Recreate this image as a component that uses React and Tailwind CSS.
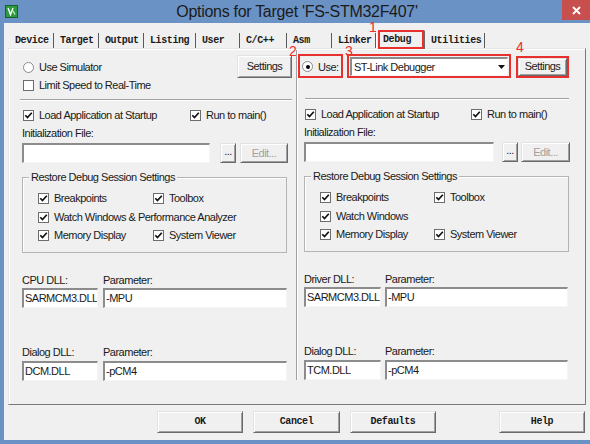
import React from 'react';

const sans = "font-['Liberation_Sans',Arial,sans-serif] text-[11px] tracking-[-0.5px] text-[#1a1a1a]";
const mono = "font-['Liberation_Mono','Courier_New',monospace] font-bold text-[10px] tracking-[-0.4px] text-[#1a1a1a]";

const raised =
    'bg-[#f0f0f0] border border-t-[#e3e3e3] border-l-[#e3e3e3] border-r-[#696969] border-b-[#696969] shadow-[inset_1px_1px_0_#ffffff,inset_-1px_-1px_0_#a0a0a0]';
const sunken =
    'bg-white border-t-2 border-l-2 border-r border-b border-t-[#8c8c8c] border-l-[#8c8c8c] border-r-[#f5f5f5] border-b-[#f5f5f5]';

const CheckMark = () => (
    <svg width="9" height="9" viewBox="0 0 9 9">
        <path d="M1.3 4.2 L3.5 6.6 L7.8 1.8" stroke="#111" strokeWidth="1.7" fill="none" />
    </svg>
);

const Check = ({ label, checked = true, className = '' }) => (
    <div className={`flex items-center h-[14px] ${className}`}>
        <span className="w-[11px] h-[11px] shrink-0 border border-[#6d6d6d] bg-white flex items-center justify-center">
            {checked && <CheckMark />}
        </span>
        <span className="ml-[5px] leading-[14px] whitespace-nowrap">{label}</span>
    </div>
);

const Radio = ({ label, checked = false }) => (
    <div className="flex items-center h-[14px]">
        <span className="w-[11px] h-[11px] shrink-0 rounded-full border border-[#8a8a8a] bg-white flex items-center justify-center">
            {checked && <span className="w-[4px] h-[4px] rounded-full bg-black" />}
        </span>
        <span className="ml-[5px] leading-[14px] whitespace-nowrap">{label}</span>
    </div>
);

const Btn = ({ children, className = '', disabled = false, font = sans }) => (
    <div className={`${raised} ${font} flex items-center justify-center leading-none ${disabled ? '!text-[#a0a0a0]' : ''} ${className}`}>
        {children}
    </div>
);

const Field = ({ value = '', className = '' }) => (
    <div className={`${sunken} h-[20px] flex items-center pl-[1px] overflow-hidden whitespace-nowrap ${className}`}>
        {value}
    </div>
);

const Separator = ({ className = '' }) => (
    <div className={`h-[2px] border-t border-t-[#a0a0a0] border-b border-b-white ${className}`} />
);

const GroupBox = ({ rows, toolCol }) => (
    <div className="relative w-[265px] h-[76px] border border-[#b4b4b4] shadow-[inset_1px_1px_0_#ffffff] pt-[13px] pl-[15px]">
        <span className="absolute -top-[8px] left-[6px] px-[2px] bg-[#f0f0f0] leading-[14px]">
            Restore Debug Session Settings
        </span>
        <div className="flex">
            <Check label="Breakpoints" className={toolCol} />
            <Check label="Toolbox" />
        </div>
        <div className="flex mt-[5px]">
            <Check label={rows} />
        </div>
        <div className="flex mt-[4px]">
            <Check label="Memory Display" className={toolCol} />
            <Check label="System Viewer" />
        </div>
    </div>
);

const TABS = [
    { name: 'Device', w: 'w-[45px]' },
    { name: 'Target', w: 'w-[45px]' },
    { name: 'Output', w: 'w-[45px]' },
    { name: 'Listing', w: 'w-[52px]' },
    { name: 'User', w: 'w-[44px]' },
    { name: 'C/C++', w: 'w-[47px]' },
    { name: 'Asm', w: 'w-[45px]' },
    { name: 'Linker', w: 'w-[44px]' },
    { name: 'Debug', w: 'w-[49px]', active: true },
    { name: 'Utilities', w: 'w-[60px]' },
];

const App = () => {
    return (
        <div className={`relative w-[590px] h-[444px] bg-[#6b92c5] overflow-hidden flex flex-col ${sans}`}>
            {/* 제목줄 */}
            <div className="h-[23px] flex items-start shrink-0">
                <div className="ml-[5px] mt-[5px] w-[13px] h-[13px]">
                    <svg width="13" height="13" viewBox="0 0 13 13">
                        <rect x="0.5" y="0.5" width="12" height="12" fill="#2e9a3e" stroke="#1a5f25" />
                        <path d="M3 3 L5.5 9.5 L8 3" stroke="#ffffff" strokeWidth="1.4" fill="none" />
                        <path d="M8 6 L10 9.5" stroke="#d8f0d8" strokeWidth="1.2" fill="none" />
                    </svg>
                </div>
                <div className="flex-1 pl-[14px] text-center font-['Liberation_Sans',Arial,sans-serif] text-[16px] tracking-[-0.3px] text-[#1b1b1b] leading-[23px]">
                    Options for Target 'FS-STM32F407'
                </div>
                <div className="w-[28px] h-[20px] bg-[#c7504f] flex items-center justify-center">
                    <svg width="9" height="9" viewBox="0 0 9 9">
                        <path d="M1 1 L8 8 M8 1 L1 8" stroke="#ffffff" strokeWidth="1.8" />
                    </svg>
                </div>
            </div>

            {/* 본문 */}
            <div className="flex-1 ml-[4px] mb-[4px] bg-[#f0f0f0] flex flex-col">
                {/* 탭 */}
                <div className="mt-[7px] pl-[5px] h-[18px] flex items-end">
                    {TABS.map((t) =>
                        t.active ? (
                            <div
                                key={t.name}
                                className={`${t.w} ${mono} relative z-10 h-[19px] -mb-[1px] bg-[#f0f0f0] border-t border-l border-t-white border-l-white border-r border-r-[#696969] pl-[6px] pt-[3px] leading-[12px]`}
                            >
                                {t.name}
                            </div>
                        ) : (
                            <div
                                key={t.name}
                                className={`${t.w} ${mono} h-[15px] border-r border-r-[#5a5a5a] pl-[6px] pt-[2px] leading-[12px]`}
                            >
                                {t.name}
                            </div>
                        )
                    )}
                </div>

                {/* 탭 패널 */}
                <div className="ml-[4px] w-[578px] h-[357px] border border-t-[#e6e6e6] border-l-[#e6e6e6] border-r-[#7a7a7a] border-b-[#7a7a7a] shadow-[inset_1px_1px_0_#ffffff] flex">
                    {/* 왼쪽: 시뮬레이터 */}
                    <div className="w-[287px] flex flex-col">
                        <div className="pt-[6px] pl-[14px] pr-[4px] flex items-start">
                            <div className="flex flex-col pt-[5px]">
                                <Radio label="Use Simulator" />
                                <Check label="Limit Speed to Real-Time" checked={false} className="mt-[4px]" />
                            </div>
                            <Btn className="ml-auto w-[55px] h-[23px]">Settings</Btn>
                        </div>
                        <Separator className="mt-[7px] ml-[11px] mr-[4px]" />
                        <div className="mt-[7px] pl-[14px] flex">
                            <Check label="Load Application at Startup" className="w-[167px]" />
                            <Check label="Run to main()" />
                        </div>
                        <div className="mt-[4px] pl-[13px] h-[14px] leading-[14px]">Initialization File:</div>
                        <div className="mt-[3px] pl-[13px] flex">
                            <Field className="w-[188px]" />
                            <Btn className="ml-[10px] w-[16px] h-[20px] pb-[4px]">...</Btn>
                            <Btn className="ml-[4px] w-[48px] h-[20px]" disabled>Edit...</Btn>
                        </div>
                        <div className="mt-[14px] ml-[13px]">
                            <GroupBox rows="Watch Windows & Performance Analyzer" toolCol="w-[115px]" />
                        </div>
                        <div className="mt-[20px] pl-[13px] flex h-[14px] leading-[14px]">
                            <span className="w-[81px]">CPU DLL:</span>
                            <span>Parameter:</span>
                        </div>
                        <div className="mt-[1px] pl-[13px] flex">
                            <Field className="w-[76px]" value="SARMCM3.DLL" />
                            <Field className="ml-[5px] w-[184px]" value="-MPU" />
                        </div>
                        <div className="mt-[37px] pl-[13px] flex h-[14px] leading-[14px]">
                            <span className="w-[81px]">Dialog DLL:</span>
                            <span>Parameter:</span>
                        </div>
                        <div className="mt-[2px] pl-[13px] flex">
                            <Field className="w-[76px]" value="DCM.DLL" />
                            <Field className="ml-[5px] w-[184px]" value="-pCM4" />
                        </div>
                    </div>

                    {/* 구분선 */}
                    <div className="w-[2px] h-[330px] mt-[1px] border-l border-l-[#a0a0a0] border-r border-r-white" />

                    {/* 오른쪽: 디버거 */}
                    <div className="flex-1 flex flex-col">
                        <div className="pt-[8px] pl-[4px] flex items-center">
                            <div className="w-[48px]">
                                <Radio label="Use:" checked />
                            </div>
                            <div className={`${sunken} w-[158px] h-[19px] flex items-center justify-between`}>
                                <span className="pl-[2px] whitespace-nowrap">ST-Link Debugger</span>
                                <span className="w-[12px] h-full flex items-center justify-center">
                                    <svg width="7" height="4" viewBox="0 0 7 4">
                                        <path d="M0 0 L7 0 L3.5 4 Z" fill="#111" />
                                    </svg>
                                </span>
                            </div>
                            <Btn className="ml-[10px] w-[49px] h-[18px]">Settings</Btn>
                        </div>
                        <Separator className="mt-[22px] ml-[7px] w-[264px]" />
                        <div className="mt-[7px] pl-[7px] flex">
                            <Check label="Load Application at Startup" className="w-[166px]" />
                            <Check label="Run to main()" />
                        </div>
                        <div className="mt-[4px] pl-[6px] h-[14px] leading-[14px]">Initialization File:</div>
                        <div className="mt-[3px] pl-[6px] flex">
                            <Field className="w-[190px]" />
                            <Btn className="ml-[8px] w-[16px] h-[20px] pb-[4px]">...</Btn>
                            <Btn className="ml-[3px] w-[49px] h-[20px]" disabled>Edit...</Btn>
                        </div>
                        <div className="mt-[14px] ml-[6px]">
                            <GroupBox rows="Watch Windows" toolCol="w-[114px]" />
                        </div>
                        <div className="mt-[20px] pl-[6px] flex h-[14px] leading-[14px]">
                            <span className="w-[81px]">Driver DLL:</span>
                            <span>Parameter:</span>
                        </div>
                        <div className="mt-[1px] pl-[6px] flex">
                            <Field className="w-[77px]" value="SARMCM3.DLL" />
                            <Field className="ml-[4px] w-[183px]" value="-MPU" />
                        </div>
                        <div className="mt-[37px] pl-[6px] flex h-[14px] leading-[14px]">
                            <span className="w-[81px]">Dialog DLL:</span>
                            <span>Parameter:</span>
                        </div>
                        <div className="mt-[2px] pl-[6px] flex">
                            <Field className="w-[77px]" value="TCM.DLL" />
                            <Field className="ml-[4px] w-[183px]" value="-pCM4" />
                        </div>
                    </div>
                </div>

                {/* 하단 버튼 */}
                <div className="mt-[6px] flex">
                    <Btn font={mono} className="ml-[153px] w-[86px] h-[22px]">OK</Btn>
                    <Btn font={mono} className="ml-[10px] w-[87px] h-[22px]">Cancel</Btn>
                    <Btn font={mono} className="ml-[10px] w-[86px] h-[22px]">Defaults</Btn>
                    <Btn font={mono} className="ml-[63px] w-[86px] h-[22px]">Help</Btn>
                </div>
            </div>

            {/* 빨간 표시 (주석) */}
            <div className="absolute left-[378px] top-[30px] w-[46px] h-[19px] border-2 border-[#e8312f] z-20" />
            <div className="absolute left-[298px] top-[54px] w-[45px] h-[24px] border-2 border-[#e8312f] z-20" />
            <div className="absolute left-[347px] top-[54px] w-[164px] h-[24px] border-2 border-[#e8312f] z-20" />
            <div className="absolute left-[516px] top-[56px] w-[53px] h-[22px] border-2 border-[#e8312f] z-20" />
            <span className="absolute left-[369px] top-[20px] text-[14px] leading-none text-[#e8312f] tracking-normal z-20">1</span>
            <span className="absolute left-[289px] top-[44px] text-[14px] leading-none text-[#e8312f] tracking-normal z-20">2</span>
            <span className="absolute left-[345px] top-[44px] text-[14px] leading-none text-[#e8312f] tracking-normal z-20">3</span>
            <span className="absolute left-[516px] top-[40px] text-[14px] leading-none text-[#e8312f] tracking-normal z-20">4</span>
        </div>
    );
};

export default App;
